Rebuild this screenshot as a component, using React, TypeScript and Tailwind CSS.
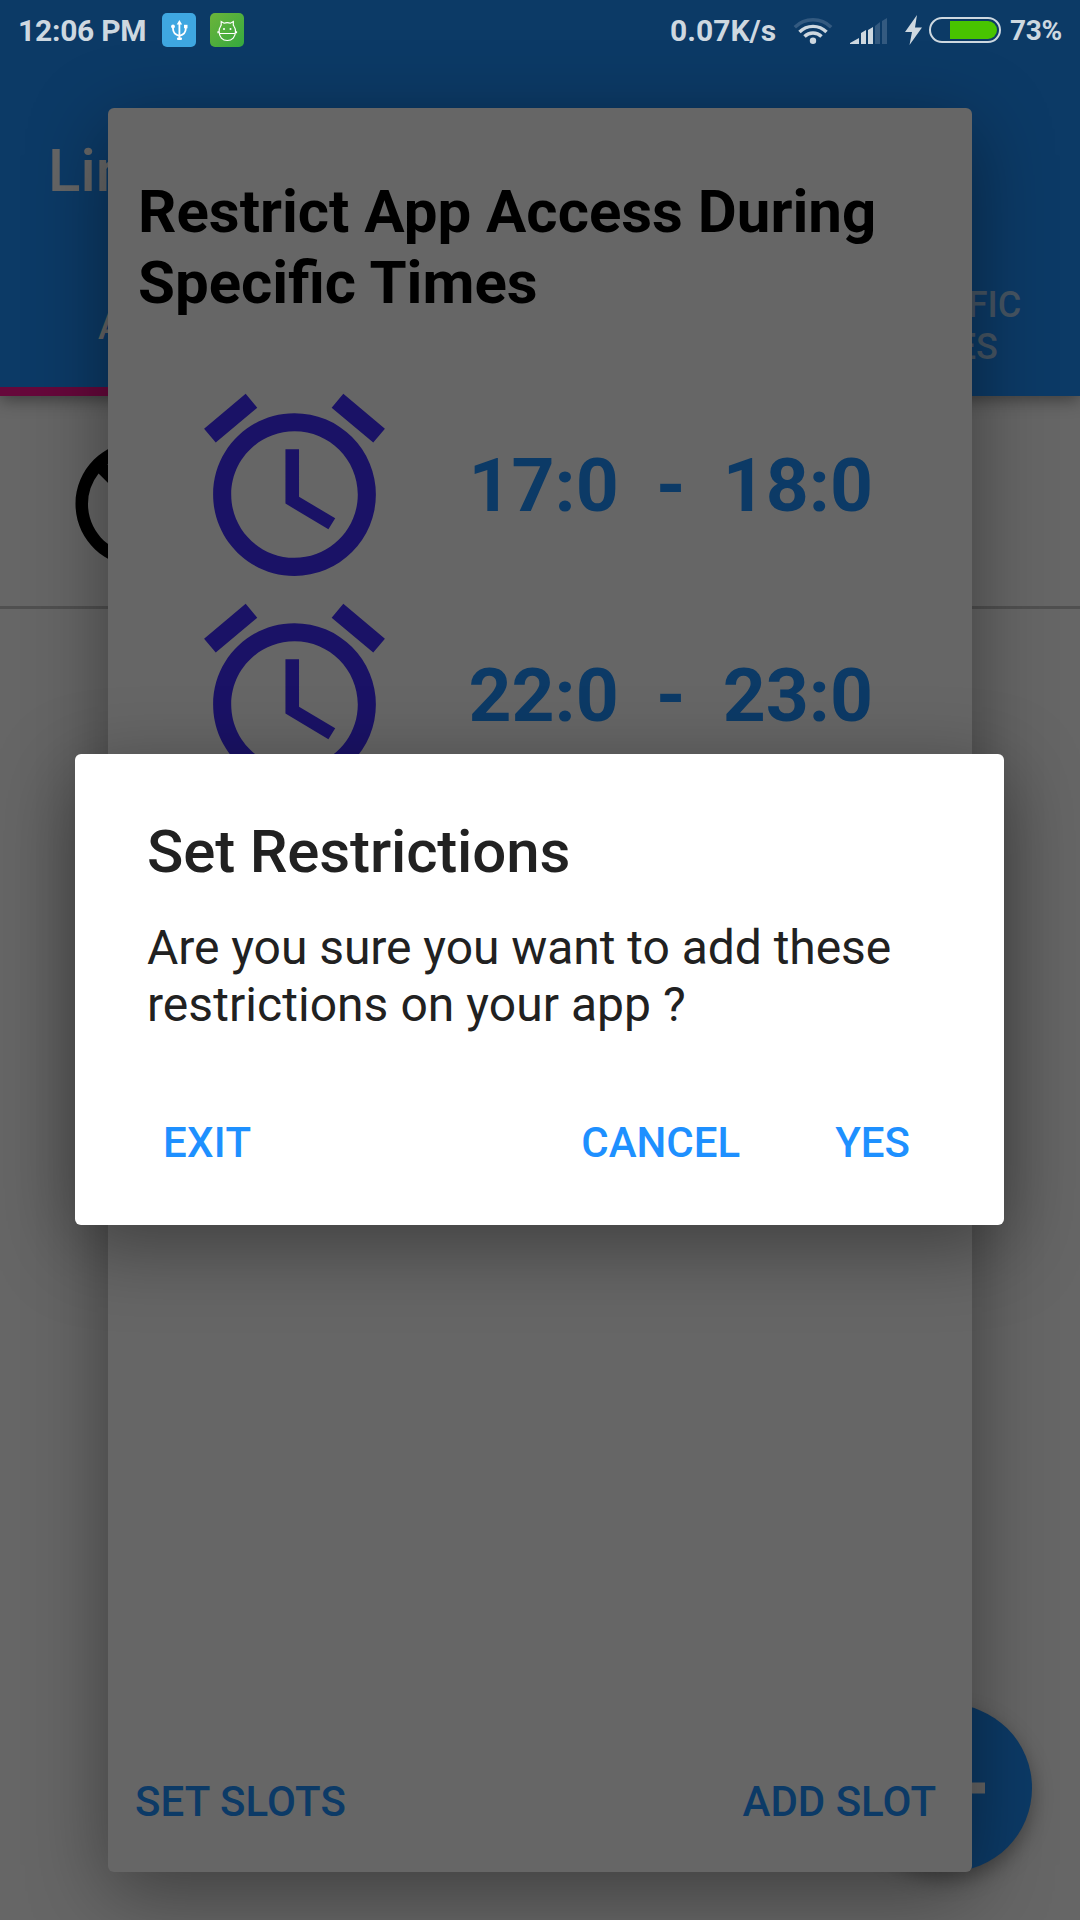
import React from "react";
import { MdAccessAlarm, MdBlock } from "react-icons/md";

function StatusBar() {
  return (
    <div className="flex h-[60px] items-center text-[30px] leading-[36px] font-bold text-[#ced8e0]">
      <span className="mt-[2px] ml-[18px] w-[129px] tracking-[-0.25px] whitespace-nowrap">12:06 PM</span>
      <svg className="ml-[15px] h-[34px] w-[34px]" viewBox="0 0 34 34" fill="none">
        <rect width="34" height="34" rx="5" fill="#3fa7e1" />
        <path d="M17.4 10v16M11 14v1.5c0 5 3 6.5 6.4 7.5 3.400-1 6.400-2.500 6.400-7.500V14" stroke="#fff" strokeWidth="1.8" />
        <path d="M17.4 7l2.700 4.500h-5.400z" fill="#fff" />
        <circle cx="11" cy="13.500" r="1.900" fill="#fff" />
        <rect x="22" y="11.800" width="3.500" height="3.500" fill="#fff" />
        <rect x="15" y="24.500" width="5" height="2.500" rx="1" fill="#fff" />
      </svg>
      <svg className="ml-[14px] h-[34px] w-[34px]" viewBox="0 0 34 34" fill="none">
        <defs>
          <linearGradient id="petGradient" x1="0" y1="0" x2="1" y2="1">
            <stop offset="0" stopColor="#6cb43a" />
            <stop offset="1" stopColor="#35aa40" />
          </linearGradient>
        </defs>
        <rect width="34" height="34" rx="5" fill="url(#petGradient)" />
        <path
          d="M11.200 12.500V8.500l2.800 1.700c2-.7 4.500-.7 6.500 0l2.800-1.700v4M10.500 13.500c-1 1.500-1.400 3-1.400 4.800C9.100 24 12.500 27.500 17.300 27.500s8.200-3.500 8.200-9.200c0-1.800-.4-3.300-1.400-4.800l-.8-1.500M11.200 12l-.9 1.700M8 18.300v2M26.500 18.300v2M10 20.500h14.500"
          stroke="#fff"
          strokeWidth="1.200"
        />
        <circle cx="14" cy="16" r="1" fill="#fff" />
        <circle cx="20.500" cy="16" r="1" fill="#fff" />
      </svg>
      <span className="mt-[2px] ml-auto whitespace-nowrap">0.07K/s</span>
      <svg className="ml-[17px] h-[30px] w-[40px]" viewBox="0 0 40 30" fill="none" strokeWidth="3.400">
        <path d="M1.800 12.200a26 26 0 0 1 36.400 0" stroke="#345a80" />
        <path d="M6.500 17a19 19 0 0 1 27 0M11.500 21.500a12 12 0 0 1 17 0" stroke="#ced8e0" />
        <circle cx="20" cy="25.800" r="3.200" fill="#ced8e0" />
      </svg>
      <svg className="mt-[2px] ml-[17px] h-[26px] w-[38px]" viewBox="0 0 38 26" fill="#ced8e0">
        <path d="M0 26v-1l9-5v6zM11 26V15l5-3v14zM18 26V12l5-3v17z" />
        <path d="M25 26V8l5-4v22zM32 26V3l5-3v26z" fill="#345a80" />
      </svg>
      <svg className="ml-[17px] h-[30px] w-[17px]" viewBox="0 0 17 30" fill="#ced8e0">
        <path d="M12 0L0 17h7L4.500 30 17 12.500h-7z" />
      </svg>
      <div className="ml-[7px] flex h-[26px] w-[72px] justify-end rounded-full border-2 border-[#ced8e0] p-[2px]">
        <div className="h-[18px] w-[47px] rounded-r-full bg-[#48c400]" />
      </div>
      <span className="mt-[2px] mr-[18px] ml-[9px] text-[28px] tracking-[-0.3px] whitespace-nowrap">73%</span>
    </div>
  );
}

function BackgroundScreen() {
  return (
    <div className="flex h-full flex-col [grid-area:1/1]">
      <header className="flex h-[396px] shrink-0 flex-col bg-[#0c3a66] shadow-[0_4px_16px_rgba(0,0,0,0.4)]">
        <StatusBar />
        <h1 className="mt-[76px] pl-[48px] text-[60px] leading-[70px] font-medium text-[#666]">Limit</h1>
        <div className="mt-auto flex h-[168px] text-center text-[36px] leading-[42px] font-medium">
          <div className="flex w-[360px] flex-col">
            <span className="mt-[78px] w-full pl-[98px] text-left text-[#666]">ALL APPS</span>
            <div className="mt-auto h-[9px] bg-[#66083b]" />
          </div>
          <div className="mt-[56px] mr-[55px] ml-auto w-[160px] text-[#465563]">
            SPECIFIC
            <br />
            TIMES
          </div>
        </div>
      </header>
      <div className="flex h-[213px] items-center border-b-[3px] border-[#505050] pt-[6px] pl-[63px]">
        <MdBlock className="h-[150px] w-[150px] -scale-x-100 text-black" />
      </div>
      <div className="mt-auto mr-[48px] mb-[48px] flex h-[168px] w-[168px] items-center justify-center self-end rounded-full bg-[#0c3a66] shadow-[0_8px_20px_rgba(0,0,0,0.35)]">
        <svg className="h-[74px] w-[74px]" viewBox="0 0 74 74" fill="#666">
          <path d="M31.500 0h11v31.500H74v11H42.500V74h-11V42.500H0v-11h31.500z" />
        </svg>
      </div>
    </div>
  );
}

const slots = [
  { from: "17:0", to: "18:0" },
  { from: "22:0", to: "23:0" },
];

function SlotsDialog() {
  return (
    <section className="z-10 mx-[108px] mt-[108px] mb-[48px] flex flex-col rounded-[6px] bg-[#666] shadow-[0_20px_80px_rgba(0,0,0,0.4)] [grid-area:1/1]">
      <h2 className="mt-[68px] pl-[30px] text-[60px] leading-[71px] font-bold text-black">
        Restrict App Access During
        <br />
        Specific Times
      </h2>
      <div className="mt-[62px]">
        {slots.map((slot) => (
          <div key={slot.from} className="flex h-[210px] items-center pl-[78px]">
            <MdAccessAlarm className="h-[217px] w-[217px] shrink-0 text-[#1a1266]" />
            <div className="mr-[99px] ml-auto text-[75px] leading-[88px] font-bold whitespace-pre text-[#0c3a66]">
              {slot.from + "  -  " + slot.to}
            </div>
          </div>
        ))}
      </div>
      <div className="mt-auto mb-[40px] flex justify-between pr-[36px] pl-[27px] text-[42px] leading-[60px] font-medium text-[#0c3a66]">
        <button className="tracking-[0.1px]">SET SLOTS</button>
        <button>ADD SLOT</button>
      </div>
    </section>
  );
}

function ConfirmDialog() {
  return (
    <section className="z-20 mt-[754px] ml-[75px] flex h-[471px] w-[929px] flex-col self-start rounded-[6px] bg-white text-[#212121] shadow-[0_20px_80px_rgba(0,0,0,0.4)] [grid-area:1/1]">
      <h2 className="mt-[63px] pl-[72px] text-[60px] leading-[70px] font-medium tracking-[-0.15px]">Set Restrictions</h2>
      <p className="mt-[32px] pl-[72px] text-[48px] leading-[57px]">
        <span className="tracking-[-0.05px]">Are you sure you want to add these</span>
        <br />
        <span className="tracking-[0.05px]">restrictions on your app ?</span>
      </p>
      <div className="mt-auto mb-[52px] flex pr-[94px] pl-[88px] text-[42px] leading-[60px] font-medium text-[#1e90ff]">
        <button className="tracking-[0.3px]">EXIT</button>
        <button className="ml-auto">CANCEL</button>
        <button className="ml-[95px]">YES</button>
      </div>
    </section>
  );
}

export default function App() {
  return (
    <main className="grid h-[1920px] w-[1080px] grid-cols-[1080px] grid-rows-[1920px] overflow-hidden bg-[#666] font-[Roboto,sans-serif]">
      <BackgroundScreen />
      <SlotsDialog />
      <ConfirmDialog />
    </main>
  );
}
